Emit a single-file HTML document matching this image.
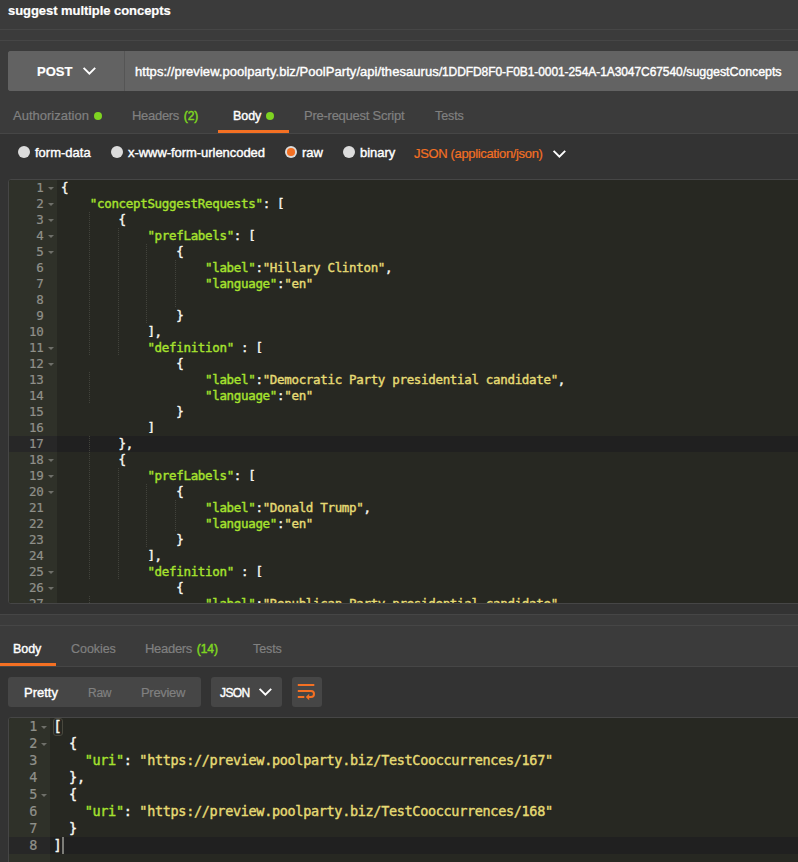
<!DOCTYPE html>
<html><head><meta charset="utf-8"><title>suggest multiple concepts</title>
<style>
*{box-sizing:border-box;margin:0;padding:0}
html,body{width:798px;height:862px;overflow:hidden;background:#3b3b3b}
body{position:relative;font-family:"Liberation Sans",sans-serif;font-size:13px;color:#fff;-webkit-font-smoothing:antialiased}
.abs{position:absolute}
.t{position:absolute;white-space:nowrap;line-height:20px;height:20px;-webkit-text-stroke:0.2px}
.hl{position:absolute;left:0;width:798px;height:1px;background:#464646}
.band{position:absolute;left:0;width:798px}
.w{-webkit-text-stroke:0.4px}
.grey{color:#808080}
.green{color:#7ed321}
.cnt{font-size:12px;letter-spacing:0;-webkit-text-stroke:0.5px;margin-left:1px}
.orange{color:#f47023}
.dot{position:absolute;width:8px;height:8px;border-radius:50%;background:#7ed321}
.radio{position:absolute;width:12px;height:12px;border-radius:50%;background:#dcdcdc}
.radio.on::after{content:"";position:absolute;left:2.25px;top:2.25px;width:7.5px;height:7.5px;border-radius:50%;background:#f47023}
/* editors */
.ed{position:absolute;left:8px;width:800px;background:#272822;border:1px solid #464646;border-radius:3px;overflow:hidden;font-family:"DejaVu Sans Mono","Liberation Mono",monospace;color:#f8f8f2}
.ed .gut{position:absolute;left:0;top:0;bottom:0;background:#2f3129;color:#8f908a}
.ed .gl{position:relative;text-align:right;white-space:pre;-webkit-text-stroke:0.2px}
.ed .cl{position:relative;white-space:pre;-webkit-text-stroke:0.4px}
.ed .k{color:#a6e22e}
.ed .s{color:#e6db74}
.ed .act{position:absolute;left:0;right:0}
.fa{position:absolute;width:0;height:0;border-left:3px solid transparent;border-right:3px solid transparent;border-top:3px solid #6e6f69}
.ig{position:absolute;top:0;bottom:0;width:1px;background-image:linear-gradient(to bottom,#42433c 50%,transparent 50%);background-size:1px 2px}
#ed1{top:179px;height:425px;font-size:12.5px;letter-spacing:-0.325px;line-height:16px;--cw:7.2px}
#ed1 .gut{width:48px}
#ed1 .gl{height:16px;padding-right:13.5px}
#ed1 .gl .fa{right:3.5px;top:7px}
#ed1 .code{position:absolute;left:52px;top:0}
#ed1 .cl{height:16px}
#ed2{top:717px;height:160px;font-size:13.5px;letter-spacing:-0.327px;line-height:17px;--cw:7.8px}
#ed2 .gut{width:41px}
#ed2 .gl{height:17px;padding-right:13px;top:0}
#ed2 .gl .fa{right:3.5px;top:8px}
#ed2 .code{position:absolute;left:44.5px;top:0}
#ed2 .cl{height:17px}
.btn{position:absolute;top:677px;height:30px;background:#464646;border-radius:3px}
</style></head><body>

<!-- title -->
<div class="t" id="title" style="left:8px;font-size:13px;letter-spacing:-0.05px;top:1px;font-weight:bold;">suggest multiple concepts</div>
<div class="hl" style="top:29px"></div>
<div class="hl" style="top:40px"></div>

<!-- url bar -->
<div class="abs" style="left:8px;top:51px;width:800px;height:40px;background:#636363;border-radius:3px;overflow:hidden">
  <div class="abs" style="left:0;top:0;width:117px;height:40px;background:#626262;border-right:1px solid #555"></div>
</div>
<div class="t" id="post" style="left:37px;font-size:13px;letter-spacing:0px;top:62px;font-weight:bold;">POST</div>
<svg class="abs" style="left:82px;top:64px" width="16" height="14" viewBox="0 0 16 14"><path d="M1.6 3.9 L7.4 9.7 L13.2 3.9" fill="none" stroke="#fff" stroke-width="1.9"/></svg>
<div class="t w" id="urla" style="left:135px;font-size:13px;letter-spacing:0.05px;top:62px;">https://preview.poolparty.biz/PoolParty/api/thesaurus/</div>
<div class="t w" id="urlb" style="left:442px;font-size:12px;letter-spacing:-0.08px;top:62px;">1DDFD8F0-F0B1-0001-254A-1A3047C67540</div>
<div class="t w" id="urlc" style="left:683px;font-size:12.5px;letter-spacing:-0.1px;top:62px;">/suggestConcepts</div>

<!-- request tabs -->
<div class="t grey" id="tab1" style="left:13px;font-size:13px;letter-spacing:0px;top:106px">Authorization</div>
<div class="dot" style="left:94px;top:112px"></div>
<div class="t grey" id="tab2" style="left:132px;font-size:13px;letter-spacing:0px;top:106px"><span style="letter-spacing:-0.3px">Headers</span> <span class="green cnt">(2)</span></div>
<div class="t w" id="tab3" style="left:233px;font-size:12.5px;letter-spacing:-0.05px;top:106px">Body</div>
<div class="dot" style="left:266px;top:112px"></div>
<div class="t grey" id="tab4" style="left:304px;font-size:13px;letter-spacing:-0.25px;top:106px">Pre-request Script</div>
<div class="t grey" id="tab5" style="left:435px;font-size:12.5px;letter-spacing:-0.1px;top:106px">Tests</div>
<div class="abs" style="left:218px;top:130px;width:71px;height:3px;background:#f47023"></div>
<div class="hl" style="top:133px"></div>
<div class="band" style="top:134px;height:480px;background:#333"></div>

<!-- radio row -->
<div class="radio" style="left:18px;top:146px"></div>
<div class="t w" id="r1" style="left:35px;font-size:13px;letter-spacing:0px;top:143px">form-data</div>
<div class="radio" style="left:111px;top:146px"></div>
<div class="t w" id="r2" style="left:128px;font-size:13px;letter-spacing:-0.05px;top:143px">x-www-form-urlencoded</div>
<div class="radio on" style="left:285px;top:146px"></div>
<div class="t w" id="r3" style="left:302px;font-size:13px;letter-spacing:0px;top:143px">raw</div>
<div class="radio" style="left:343px;top:146px"></div>
<div class="t w" id="r4" style="left:360px;font-size:13px;letter-spacing:-0.05px;top:143px">binary</div>
<div class="t orange" id="r5" style="left:414px;font-size:13px;letter-spacing:-0.35px;top:144px">JSON (application/json)</div>
<svg class="abs" style="left:552px;top:147px" width="16" height="14" viewBox="0 0 16 14"><path d="M1.6 3.9 L7.4 9.7 L13.2 3.9" fill="none" stroke="#fff" stroke-width="1.9"/></svg>

<!-- request editor -->
<div class="ed" id="ed1">
  <div class="act" style="top:256px;height:16px;background:#202020"></div>
  <div class="gut"><div class="act" style="top:256px;height:16px;background:#272727"></div><div class="gl">1<i class="fa"></i></div><div class="gl">2<i class="fa"></i></div><div class="gl">3<i class="fa"></i></div><div class="gl">4<i class="fa"></i></div><div class="gl">5<i class="fa"></i></div><div class="gl">6</div><div class="gl">7</div><div class="gl">8</div><div class="gl">9</div><div class="gl">10</div><div class="gl">11<i class="fa"></i></div><div class="gl">12<i class="fa"></i></div><div class="gl">13</div><div class="gl">14</div><div class="gl">15</div><div class="gl">16</div><div class="gl">17</div><div class="gl">18<i class="fa"></i></div><div class="gl">19<i class="fa"></i></div><div class="gl">20<i class="fa"></i></div><div class="gl">21</div><div class="gl">22</div><div class="gl">23</div><div class="gl">24</div><div class="gl">25<i class="fa"></i></div><div class="gl">26<i class="fa"></i></div><div class="gl">27</div></div>
  <div class="code"><div class="cl">{</div><div class="cl">    <span class="k">"conceptSuggestRequests"</span>: [</div><div class="cl"><b class="ig" style="left:calc(var(--cw) * 4 - 1px)"></b>        {</div><div class="cl"><b class="ig" style="left:calc(var(--cw) * 4 - 1px)"></b><b class="ig" style="left:calc(var(--cw) * 8 - 1px)"></b>            <span class="k">"prefLabels"</span>: [</div><div class="cl"><b class="ig" style="left:calc(var(--cw) * 4 - 1px)"></b><b class="ig" style="left:calc(var(--cw) * 8 - 1px)"></b><b class="ig" style="left:calc(var(--cw) * 12 - 1px)"></b>                {</div><div class="cl"><b class="ig" style="left:calc(var(--cw) * 4 - 1px)"></b><b class="ig" style="left:calc(var(--cw) * 8 - 1px)"></b><b class="ig" style="left:calc(var(--cw) * 12 - 1px)"></b><b class="ig" style="left:calc(var(--cw) * 16 - 1px)"></b>                    <span class="k">"label"</span>:<span class="s">"Hillary Clinton"</span>,</div><div class="cl"><b class="ig" style="left:calc(var(--cw) * 4 - 1px)"></b><b class="ig" style="left:calc(var(--cw) * 8 - 1px)"></b><b class="ig" style="left:calc(var(--cw) * 12 - 1px)"></b><b class="ig" style="left:calc(var(--cw) * 16 - 1px)"></b>                    <span class="k">"language"</span>:<span class="s">"en"</span></div><div class="cl"><b class="ig" style="left:calc(var(--cw) * 4 - 1px)"></b><b class="ig" style="left:calc(var(--cw) * 8 - 1px)"></b><b class="ig" style="left:calc(var(--cw) * 12 - 1px)"></b><b class="ig" style="left:calc(var(--cw) * 16 - 1px)"></b></div><div class="cl"><b class="ig" style="left:calc(var(--cw) * 4 - 1px)"></b><b class="ig" style="left:calc(var(--cw) * 8 - 1px)"></b><b class="ig" style="left:calc(var(--cw) * 12 - 1px)"></b>                }</div><div class="cl"><b class="ig" style="left:calc(var(--cw) * 4 - 1px)"></b><b class="ig" style="left:calc(var(--cw) * 8 - 1px)"></b>            ],</div><div class="cl"><b class="ig" style="left:calc(var(--cw) * 4 - 1px)"></b><b class="ig" style="left:calc(var(--cw) * 8 - 1px)"></b>            <span class="k">"definition"</span> : [</div><div class="cl">                {</div><div class="cl"><b class="ig" style="left:calc(var(--cw) * 4 - 1px)"></b>                    <span class="k">"label"</span>:<span class="s">"Democratic Party presidential candidate"</span>,</div><div class="cl"><b class="ig" style="left:calc(var(--cw) * 4 - 1px)"></b>                    <span class="k">"language"</span>:<span class="s">"en"</span></div><div class="cl">                }</div><div class="cl">            ]</div><div class="cl"><b class="ig" style="left:calc(var(--cw) * 4 - 1px)"></b>        },</div><div class="cl"><b class="ig" style="left:calc(var(--cw) * 4 - 1px)"></b>        {</div><div class="cl"><b class="ig" style="left:calc(var(--cw) * 4 - 1px)"></b><b class="ig" style="left:calc(var(--cw) * 8 - 1px)"></b>            <span class="k">"prefLabels"</span>: [</div><div class="cl"><b class="ig" style="left:calc(var(--cw) * 4 - 1px)"></b><b class="ig" style="left:calc(var(--cw) * 8 - 1px)"></b><b class="ig" style="left:calc(var(--cw) * 12 - 1px)"></b>                {</div><div class="cl"><b class="ig" style="left:calc(var(--cw) * 4 - 1px)"></b><b class="ig" style="left:calc(var(--cw) * 8 - 1px)"></b><b class="ig" style="left:calc(var(--cw) * 12 - 1px)"></b><b class="ig" style="left:calc(var(--cw) * 16 - 1px)"></b>                    <span class="k">"label"</span>:<span class="s">"Donald Trump"</span>,</div><div class="cl"><b class="ig" style="left:calc(var(--cw) * 4 - 1px)"></b><b class="ig" style="left:calc(var(--cw) * 8 - 1px)"></b><b class="ig" style="left:calc(var(--cw) * 12 - 1px)"></b><b class="ig" style="left:calc(var(--cw) * 16 - 1px)"></b>                    <span class="k">"language"</span>:<span class="s">"en"</span></div><div class="cl"><b class="ig" style="left:calc(var(--cw) * 4 - 1px)"></b><b class="ig" style="left:calc(var(--cw) * 8 - 1px)"></b><b class="ig" style="left:calc(var(--cw) * 12 - 1px)"></b>                }</div><div class="cl"><b class="ig" style="left:calc(var(--cw) * 4 - 1px)"></b><b class="ig" style="left:calc(var(--cw) * 8 - 1px)"></b>            ],</div><div class="cl"><b class="ig" style="left:calc(var(--cw) * 4 - 1px)"></b><b class="ig" style="left:calc(var(--cw) * 8 - 1px)"></b>            <span class="k">"definition"</span> : [</div><div class="cl">                {</div><div class="cl"><b class="ig" style="left:calc(var(--cw) * 4 - 1px)"></b>                    <span class="k">"label"</span>:<span class="s">"Republican Party presidential candidate"</span>,</div></div>
</div>

<!-- separator -->
<div class="hl" style="top:614px"></div>
<div class="hl" style="top:625px"></div>

<!-- response tabs -->
<div class="t w" id="rt1" style="left:13px;font-size:12.5px;letter-spacing:-0.05px;top:639px">Body</div>
<div class="t grey" id="rt2" style="left:71px;font-size:12.5px;letter-spacing:-0.05px;top:639px">Cookies</div>
<div class="t grey" id="rt3" style="left:145px;font-size:13px;letter-spacing:0px;top:639px"><span style="letter-spacing:-0.3px">Headers</span> <span class="green cnt">(14)</span></div>
<div class="t grey" id="rt4" style="left:253px;font-size:12.5px;letter-spacing:-0.1px;top:639px">Tests</div>
<div class="abs" style="left:0;top:663px;width:56px;height:3px;background:#f47023"></div>
<div class="hl" style="top:666px"></div>
<div class="band" style="top:667px;height:200px;background:#333"></div>

<!-- buttons -->
<div class="btn" style="left:8px;width:193px"></div>
<div class="t w" id="b1" style="left:24px;font-size:13px;letter-spacing:0px;top:683px">Pretty</div>
<div class="t grey" id="b2" style="left:88px;font-size:12px;letter-spacing:-0.25px;top:683px">Raw</div>
<div class="t grey" id="b3" style="left:141px;font-size:13px;letter-spacing:-0.3px;top:683px">Preview</div>
<div class="btn" style="left:211px;width:71px"></div>
<div class="t w" id="b4" style="left:220px;font-size:12px;letter-spacing:-0.6px;top:683px">JSON</div>
<svg class="abs" style="left:258px;top:685px" width="16" height="14" viewBox="0 0 16 14"><path d="M1.6 3.9 L7.4 9.7 L13.2 3.9" fill="none" stroke="#fff" stroke-width="1.9"/></svg>
<div class="btn" style="left:292px;width:30px"></div>
<svg class="abs" style="left:292px;top:677px" width="30" height="30" viewBox="0 0 30 30"><g fill="none" stroke="#f47023" stroke-width="2"><path d="M5.8 8 H22.3"/><path d="M5.8 14 H19 a3 3 0 0 1 0 6 H16.5"/><path d="M5.8 20 H12.3"/></g><path d="M17.2 16.8 L13.8 20 L17.2 23.2 Z" fill="#f47023"/></svg>

<!-- response editor -->
<div class="ed" id="ed2">
  <div class="act" style="top:119px;height:17px;background:#202020"></div>
  <div class="gut"><div class="act" style="top:119px;height:17px;background:#272727"></div><div class="gl">1<i class="fa"></i></div><div class="gl">2<i class="fa"></i></div><div class="gl">3</div><div class="gl">4</div><div class="gl">5<i class="fa"></i></div><div class="gl">6</div><div class="gl">7</div><div class="gl">8</div></div>
  <div class="abs" style="left:44px;top:0px;width:10px;height:18px;border:1px solid #49483e;border-radius:3px"></div>
  <div class="abs" style="left:53px;top:119px;width:2px;height:17px;background:#7c7c77"></div>
  <div class="code"><div class="cl">[</div><div class="cl">  {</div><div class="cl">    <span class="k">"uri"</span>: <span class="s">"https://preview.poolparty.biz/TestCooccurrences/167"</span></div><div class="cl">  },</div><div class="cl">  {</div><div class="cl">    <span class="k">"uri"</span>: <span class="s">"https://preview.poolparty.biz/TestCooccurrences/168"</span></div><div class="cl">  }</div><div class="cl">]</div></div>
</div>

</body></html>
